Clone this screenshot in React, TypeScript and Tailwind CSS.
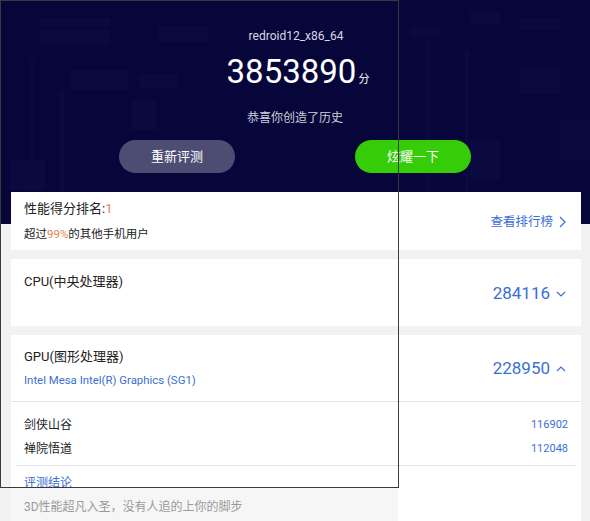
import React from 'react';

const font = { fontFamily: 'Roboto, "Noto Sans CJK SC", sans-serif' };

const HeaderPattern: React.FC = () => (
  <svg className="absolute inset-0 w-full h-full" viewBox="0 0 590 224" preserveAspectRatio="none">
    <g fill="#1c1c5a" opacity="0.2">
      <rect x="40" y="18" width="70" height="8" />
      <rect x="40" y="30" width="70" height="14" />
      <rect x="158" y="26" width="50" height="16" />
      <rect x="70" y="70" width="58" height="20" />
      <rect x="140" y="74" width="38" height="14" />
      <rect x="132" y="100" width="24" height="30" />
      <rect x="410" y="28" width="30" height="8" />
      <rect x="470" y="12" width="30" height="12" />
      <rect x="520" y="18" width="40" height="12" />
      <rect x="520" y="68" width="40" height="26" />
      <rect x="560" y="120" width="30" height="40" />
      <rect x="470" y="140" width="30" height="40" />
      <rect x="10" y="160" width="35" height="30" />
      <rect x="425" y="40" width="6" height="160" />
      <rect x="465" y="50" width="4" height="150" />
      <rect x="30" y="60" width="4" height="150" />
      <rect x="60" y="90" width="4" height="120" />
    </g>
  </svg>
);

const ChevronDown: React.FC = () => (
  <svg className="w-[10px] h-[10px]" viewBox="0 0 10 10" fill="none" stroke="#3b6fd4" strokeWidth={1.2}>
    <path d="M1 3l4 4 4-4" />
  </svg>
);

const ChevronUp: React.FC = () => (
  <svg className="w-[10px] h-[10px]" viewBox="0 0 10 10" fill="none" stroke="#3b6fd4" strokeWidth={1.2}>
    <path d="M1 7l4-4 4 4" />
  </svg>
);

const ChevronRight: React.FC = () => (
  <svg className="w-[8px] h-[12px]" viewBox="0 0 8 12" fill="none" stroke="#3b6fd4" strokeWidth={1.2}>
    <path d="M2 1l5 5-5 5" />
  </svg>
);

export default function App() {
  return (
    <div className="relative w-[590px] h-[521px] overflow-hidden bg-[#f2f2f2]" style={font}>
      {/* header */}
      <div className="relative h-[224px] bg-[#06063a]">
        <HeaderPattern />
        <div className="relative flex flex-col items-center">
          <div className="mt-[28px] ml-[2px] text-[12px] leading-[16px] text-[#d8d8e4]">redroid12_x86_64</div>
          <div className="mt-[8px] ml-[6px] flex items-baseline text-white">
            <span className="text-[33px] leading-[40px]">3853890</span>
            <span className="ml-[2px] text-[11px]">分</span>
          </div>
          <div className="mt-[17px] text-[12px] leading-[18px] text-[#cfcfdc]">恭喜你创造了历史</div>
          <div className="mt-[13px] flex gap-[120px]">
            <div className="w-[116px] h-[33px] rounded-full bg-[#4d4d74] flex items-center justify-center text-[13px] text-white">
              重新评测
            </div>
            <div className="w-[116px] h-[33px] rounded-full bg-[#35cc08] flex items-center justify-center text-[13px] text-white">
              炫耀一下
            </div>
          </div>
        </div>
      </div>

      {/* cards */}
      <div className="relative -mt-[32px] pl-[11px] pr-[9px] flex flex-col gap-[9px]">
        <div className="h-[58px] bg-white flex items-center justify-between pl-[13px] pr-[15px]">
          <div className="flex flex-col">
            <div className="text-[13px] leading-[18px] text-[#222]">
              性能得分排名:<span className="text-[#e8834e]">1</span>
            </div>
            <div className="mt-[8px] text-[11.5px] leading-[16px] text-[#222]">
              超过<span className="text-[#e8834e]">99%</span>的其他手机用户
            </div>
          </div>
          <div className="flex items-center gap-[5px] mt-[2px] text-[12.5px] text-[#3b6fd4]">
            查看排行榜
            <ChevronRight />
          </div>
        </div>

        <div className="h-[67px] bg-white relative flex justify-between pl-[13px] pr-[15px]">
          <div className="mt-[14px] text-[13px] leading-[18px] text-[#222]">CPU(中央处理器)</div>
          <div className="mt-[24px] flex items-center gap-[6px] h-[22px] text-[17px] text-[#3b6fd4]">
            284116
            <ChevronDown />
          </div>
        </div>

        <div className="bg-white flex flex-col">
          <div className="h-[67px] flex justify-between pl-[13px] pr-[15px] border-b border-[#e6e6e6]">
            <div className="flex flex-col">
              <div className="mt-[13px] text-[13px] leading-[18px] text-[#222]">GPU(图形处理器)</div>
              <div className="mt-[6px] text-[11.4px] leading-[16px] text-[#3b6fd4]">Intel Mesa Intel(R) Graphics (SG1)</div>
            </div>
            <div className="mt-[23px] flex items-center gap-[6px] h-[22px] text-[17px] text-[#3b6fd4]">
              228950
              <ChevronUp />
            </div>
          </div>
          <div className="mx-[5px] pt-[14px] pb-[7px] border-b border-[#e6e6e6] flex flex-col gap-[6px]">
            <div className="flex justify-between pl-[8px] pr-[8px] text-[12px] leading-[18px]">
              <span className="text-[#222]">剑侠山谷</span>
              <span className="text-[11px] text-[#3b6fd4]">116902</span>
            </div>
            <div className="flex justify-between pl-[8px] pr-[8px] text-[12px] leading-[18px]">
              <span className="text-[#222]">禅院悟道</span>
              <span className="text-[11px] text-[#3b6fd4]">112048</span>
            </div>
          </div>
          <div className="pl-[13px] pt-[8px] h-[22px] text-[12px] leading-[18px] text-[#3b6fd4]">评测结论</div>
          <div className="flex">
            <div className="w-[387px] pl-[13px] pt-[10px] pb-[10px] bg-[#f6f6f6] text-[12px] leading-[18px] text-[#9a9a9a]">
              3D性能超凡入圣，没有人追的上你的脚步
            </div>
          </div>
        </div>
      </div>

      {/* stray window outline drawn over the page */}
      <div className="absolute left-0 top-0 w-[399px] h-[488px] border border-[#3a3a3a] pointer-events-none" />
    </div>
  );
}
